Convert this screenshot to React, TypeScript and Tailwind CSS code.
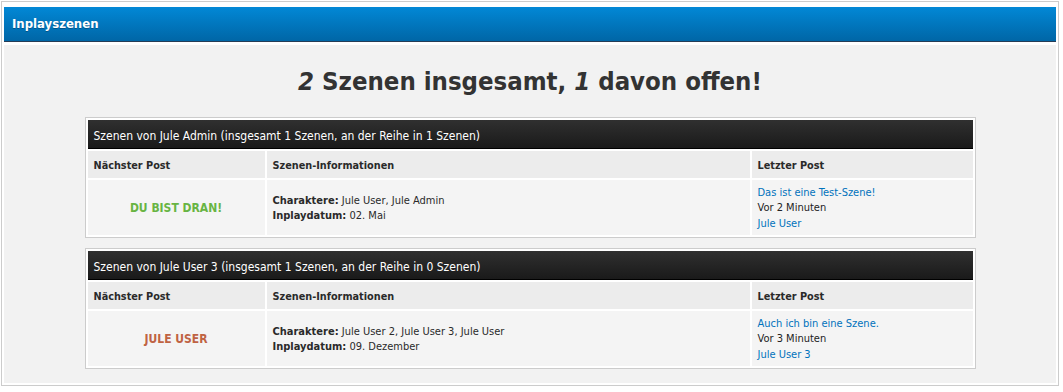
const font = "font-['DejaVu_Sans_Condensed','Liberation_Sans',sans-serif]";

interface Scene {
  owner: string;
  total: number;
  turn: number;
  next: string;
  nextColor: string;
  characters: string;
  date: string;
  lastTitle: string;
  lastTime: string;
  lastUser: string;
}

const scenes: Scene[] = [
  {
    owner: 'Jule Admin',
    total: 1,
    turn: 1,
    next: 'DU BIST DRAN!',
    nextColor: 'text-[#68b443]',
    characters: 'Jule User, Jule Admin',
    date: '02. Mai',
    lastTitle: 'Das ist eine Test-Szene!',
    lastTime: 'Vor 2 Minuten',
    lastUser: 'Jule User',
  },
  {
    owner: 'Jule User 3',
    total: 1,
    turn: 0,
    next: 'JULE USER',
    nextColor: 'text-[#bf6343]',
    characters: 'Jule User 2, Jule User 3, Jule User',
    date: '09. Dezember',
    lastTitle: 'Auch ich bin eine Szene.',
    lastTime: 'Vor 3 Minuten',
    lastUser: 'Jule User 3',
  },
];

function SceneTable({ scene }: { scene: Scene }) {
  return (
    <div className="w-[891px] mx-auto border border-[#cccccc] bg-white p-[2px]">
      <div className="h-[29px] flex items-center px-[6px] pt-[4px] bg-gradient-to-b from-[#303030] to-[#1a1a1a] border-b border-black text-white text-[12px]">
        Szenen von {scene.owner} (insgesamt {scene.total} Szenen, an der Reihe in {scene.turn} Szenen)
      </div>
      <div className="grid grid-cols-[177px_483px_1fr] gap-[2px] mt-[2px] text-[#2a2a2a]">
        <div className="h-[27px] flex items-center px-[6px] pt-[4px] bg-[#ececec] font-bold text-[10.8px]">Nächster Post</div>
        <div className="h-[27px] flex items-center px-[6px] pt-[4px] bg-[#ececec] font-bold text-[10.8px]">Szenen-Informationen</div>
        <div className="h-[27px] flex items-center px-[6px] pt-[4px] bg-[#ececec] font-bold text-[10.8px]">Letzter Post</div>

        <div className="h-[55px] flex items-center justify-center bg-[#f4f4f4]">
          <span className={`font-bold text-[12px] ${scene.nextColor}`}>{scene.next}</span>
        </div>
        <div className="h-[55px] flex flex-col justify-center px-[6px] pt-[1px] bg-[#f4f4f4] text-[11px] leading-[15px]">
          <div><b>Charaktere:</b> {scene.characters}</div>
          <div><b>Inplaydatum:</b> {scene.date}</div>
        </div>
        <div className="h-[55px] flex flex-col justify-center px-[6px] pt-[1px] bg-[#f4f4f4] text-[11px] leading-[15.5px]">
          <a href="#" className="text-[#0072bc]">{scene.lastTitle}</a>
          <span className="text-[#222222]">{scene.lastTime}</span>
          <a href="#" className="text-[#0072bc]">{scene.lastUser}</a>
        </div>
      </div>
    </div>
  );
}

export default function App() {
  return (
    <div className={`${font} bg-white w-[1063px] h-[392px] pt-[1px] pl-[1px]`}>
      <div className="w-[1058px] h-[385px] border border-[#cccccc] px-[2px] pt-[5px] pb-[2px] flex flex-col">
        <div className="h-[35px] flex items-center px-[8px] bg-gradient-to-b from-[#0288d6] to-[#0066a6] border-b border-[#263c55] text-white font-bold text-[13px] [text-shadow:0_1px_0_rgba(0,0,0,0.25)]">
          Inplayszenen
        </div>
        <div className="flex-1 mt-[3px] bg-[#f2f2f2] flex flex-col">
          <h1 className="h-[72px] flex items-center justify-center text-[25.5px] font-bold text-[#333333]">
            <span><i>2</i> Szenen insgesamt, <i>1</i> davon offen!</span>
          </h1>
          <div className="flex flex-col gap-[10px]">
            {scenes.map((s, i) => (
              <SceneTable key={i} scene={s} />
            ))}
          </div>
        </div>
      </div>
    </div>
  );
}
